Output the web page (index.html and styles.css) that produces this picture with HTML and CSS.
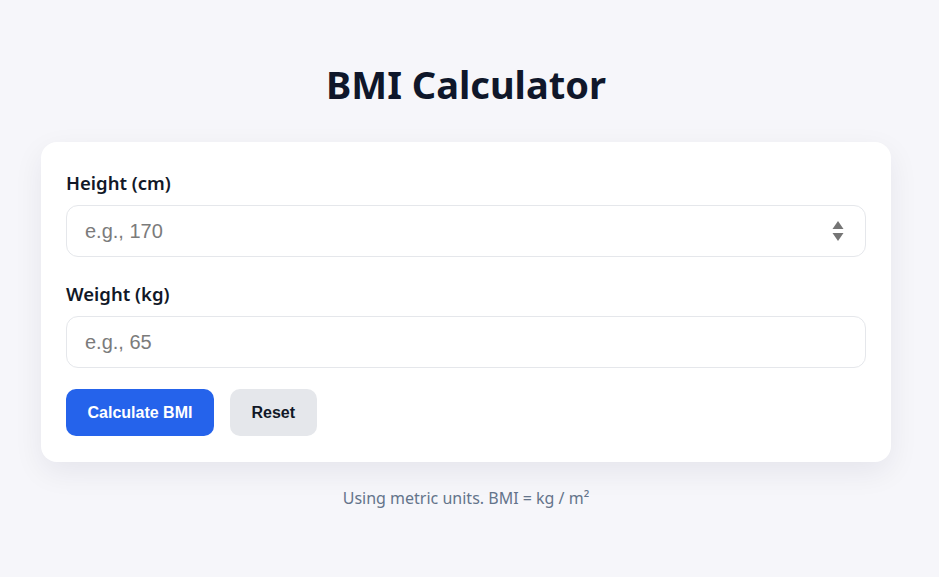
FILE: index.html
```html
<!DOCTYPE html>
<html lang="en">
<head>
<meta charset="utf-8">
<title>BMI Calculator</title>
<link rel="stylesheet" href="styles.css">
</head>
<body>
<main class="page">
  <h1 class="title">BMI Calculator</h1>
  <form class="card">
    <label class="label" for="height">Height (cm)</label>
    <div class="field">
      <input class="input" id="height" type="text" placeholder="e.g., 170">
      <span class="spinner" aria-hidden="true">
        <svg width="12" height="22" viewBox="0 0 12 22"><path d="M6 1 L11.5 9 H0.5 Z" fill="#757575"/><path d="M0.5 13 H11.5 L6 21 Z" fill="#757575"/></svg>
      </span>
    </div>
    <label class="label" for="weight">Weight (kg)</label>
    <div class="field">
      <input class="input" id="weight" type="text" placeholder="e.g., 65">
    </div>
    <div class="actions">
      <button type="button" class="btn btn-primary">Calculate BMI</button>
      <button type="button" class="btn btn-secondary">Reset</button>
    </div>
  </form>
  <p class="note">Using metric units. BMI = kg / m²</p>
</main>
</body>
</html>
```

FILE: styles.css
```css
* { box-sizing: border-box; }
html, body { margin: 0; }
body {
  background: #f6f6fa;
  font-family: "Noto Sans", "Open Sans", sans-serif;
  color: #111827;
  padding-right: 7px;
}
.page {
  width: 850px;
  margin: 0 auto;
  padding-top: 60px;
}
.title {
  margin: 0;
  text-align: center;
  font-size: 38px;
  line-height: 48px;
  font-weight: 700;
  color: #0f172a;
}
.card {
  margin-top: 34px;
  background: #fff;
  border-radius: 16px;
  padding: 28px 25px 26px;
  box-shadow: 0 10px 30px rgba(20, 20, 60, 0.07);
  display: flex;
  flex-direction: column;
}
.label {
  display: block;
  font-size: 18.5px;
  line-height: 25px;
  font-weight: 600;
  color: #111827;
  margin-bottom: 10px;
}
.field {
  position: relative;
  margin-bottom: 24px;
}
.field + .actions { margin-top: -3px; }
.input {
  display: block;
  width: 100%;
  height: 52px;
  border: 1px solid #e5e7eb;
  border-radius: 12px;
  padding: 0 18px;
  font-family: "Liberation Sans", Arial, sans-serif;
  font-size: 20px;
  color: #111827;
  background: #fff;
  outline: none;
}
.input::placeholder { color: #7b7b7b; }
.spinner {
  position: absolute;
  right: 22px;
  top: 15px;
  width: 12px;
  height: 22px;
  display: flex;
}
.actions {
  display: flex;
  gap: 16px;
}
.btn {
  height: 47px;
  border: none;
  border-radius: 10px;
  padding: 0 21.5px;
  font-family: "Liberation Sans", Arial, sans-serif;
  font-size: 16px;
  font-weight: 700;
  cursor: pointer;
}
.btn-primary {
  background: #2563eb;
  color: #fff;
}
.btn-secondary {
  background: #e5e7eb;
  color: #111827;
}
.note {
  margin: 24px 0 0;
  text-align: center;
  font-size: 16px;
  line-height: 24px;
  color: #64748b;
}
```
